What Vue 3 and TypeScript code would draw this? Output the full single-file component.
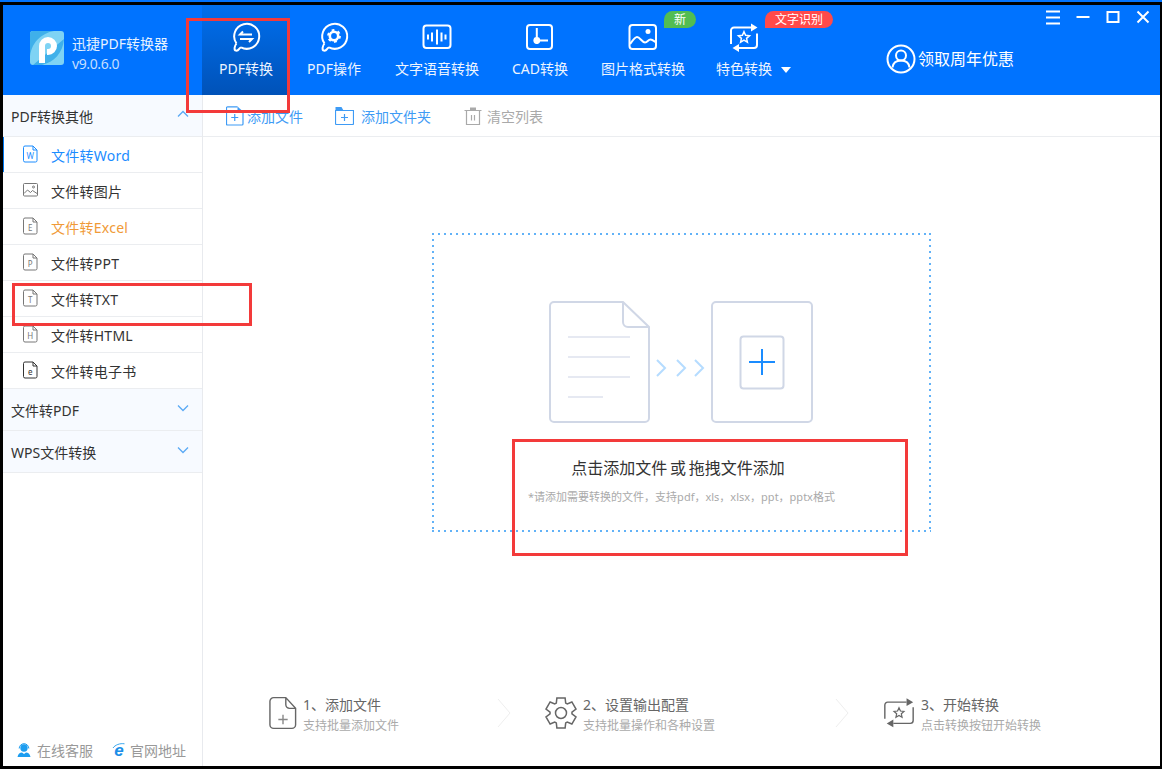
<template>
  <div class="screen">
    <div class="top-strip"></div>
    <div class="window">
      <!-- header -->
      <header class="header">
        <div class="brand">
          <svg class="brand-logo" viewBox="0 0 34 34">
            <rect width="34" height="34" rx="3" fill="#7ed3f4" />
            <path d="M0 28C0 12 12 2 24 0H3a3 3 0 0 0-3 3ZM34 8C33 22 24 31 12 34H3Z" fill="#3fb0ea" />
            <path d="M9 32V15a9 9 0 1 1 9 9h-1v-6h1a3 3 0 1 0-3-3v17Z" fill="#fff" />
          </svg>
          <div class="brand-text">
            <div>迅捷PDF转换器</div>
            <div class="brand-ver">v9.0.6.0</div>
          </div>
        </div>

        <nav class="nav">
          <div
            v-for="n in navItems"
            :key="n.key"
            class="nav-item"
            :class="{ active: n.key === 'pdf' }"
            :style="{ width: n.width + 'px' }"
          >
            <svg class="nav-icon" viewBox="0 0 32 32">
              <template v-if="n.key === 'pdf' || n.key === 'op'">
                <path d="M6.500 22.500A12.500 12.500 0 1 1 11 26.400" />
                <path d="M6.500 22.500C4.500 25 3.600 29 6 29.600C9 30.200 8.600 27 11 26.400" />
              </template>
              <template v-if="n.key === 'pdf'">
                <path d="M13 10.500L10 13.500H22M10 18H22L19 21" />
              </template>
              <template v-if="n.key === 'op'">
                <circle cx="16" cy="15" r="4.200" stroke-width="2.600" />
                <circle cx="16" cy="15" r="6" stroke-width="1.800" stroke-dasharray="2.800 3.480" />
              </template>
              <template v-if="n.key === 'voice'">
                <rect x="2.500" y="4.500" width="27" height="22.500" rx="3" />
                <path d="M7 13.500v5M11 11.500v9M16 8.500v15M20.500 11.500v9M24.500 13.500v5" />
              </template>
              <template v-if="n.key === 'cad'">
                <rect x="3" y="4" width="25" height="24" rx="3" />
                <path d="M12.800 7V23M13 19.500H24" />
                <circle cx="12.800" cy="19.500" r="3.400" fill="#fff" stroke="none" />
              </template>
              <template v-if="n.key === 'image'">
                <rect x="2.500" y="4" width="26.500" height="24" rx="3" />
                <circle cx="21" cy="10.500" r="2.500" fill="#fff" stroke="none" />
                <path d="M3 23C6 19 8 16 10 16C13 16 15 21.500 18 21.500C20.500 21.500 21 18.500 23.500 18.500C25 18.500 27 20 28.500 21" />
              </template>
              <template v-if="n.key === 'special'">
                <path d="M3 23V9.500a3 3 0 0 1 3-3H24M29 12.500V24a3 3 0 0 1-3 3H10" />
                <path d="M23 2.500L29.500 6.500L23 10.500ZM11 23L4.500 27L11 31Z" fill="#fff" stroke="none" />
                <path :d="starPath(16, 16.500, 5.800, 2.700)" stroke-width="1.500" />
              </template>
            </svg>
            <span class="nav-label">{{ n.label }}</span>
            <span v-if="n.badge" class="badge" :class="n.badgeClass">{{ n.badge }}</span>
            <span v-if="n.key === 'special'" class="caret"></span>
          </div>
        </nav>

        <div class="header-right">
          <div class="win-controls">
            <button class="win-btn">
              <svg viewBox="0 0 16 16"><path d="M1 2.500H15M1 8.500H15M1 14.500H15" /></svg>
            </button>
            <button class="win-btn">
              <svg viewBox="0 0 16 16"><path d="M1.500 8H14.500" /></svg>
            </button>
            <button class="win-btn">
              <svg viewBox="0 0 16 16"><rect x="2.500" y="3" width="11" height="10" /></svg>
            </button>
            <button class="win-btn">
              <svg viewBox="0 0 16 16"><path d="M2.500 2.500L13.500 13.500M13.500 2.500L2.500 13.500" /></svg>
            </button>
          </div>
          <div class="promo">
            <svg class="promo-icon" viewBox="0 0 30 30">
              <circle cx="15" cy="15" r="13.500" />
              <circle cx="15" cy="11.500" r="5" />
              <path d="M6.500 23.500C7 19 10 16.500 15 16.500C20 16.500 23 19 23.500 23.500" />
            </svg>
            <span>领取周年优惠</span>
          </div>
        </div>
      </header>

      <div class="body">
        <!-- sidebar -->
        <aside class="sidebar">
          <div class="side-head">
            <span>PDF转换其他</span>
            <svg class="chev" viewBox="0 0 12 8"><path d="M1 6.500L6 1.500L11 6.500" /></svg>
          </div>
          <div
            v-for="(item, i) in sideItems"
            :key="item.label"
            class="side-item"
            :class="{ current: i === 0 }"
            :style="{ color: item.color }"
          >
            <svg class="side-icon" viewBox="0 0 15 18" :style="{ color: item.iconColor }">
              <template v-if="item.letter">
                <path d="M2 1H10L14 5V15.500a1.500 1.500 0 0 1-1.500 1.500H2a1.500 1.500 0 0 1-1.500-1.500V2.500A1.500 1.500 0 0 1 2 1ZM10 1V5H14" />
                <text x="7.300" y="13.500" text-anchor="middle">{{ item.letter }}</text>
              </template>
              <template v-else>
                <rect x="0.500" y="2.500" width="14" height="12.500" rx="1" />
                <circle cx="10.500" cy="6" r="1" />
                <path d="M1 12.500L4.500 9L7.500 11.500L9.500 9.500L14 12.500" />
              </template>
            </svg>
            <span>{{ item.label }}</span>
          </div>
          <div class="side-head">
            <span>文件转PDF</span>
            <svg class="chev" viewBox="0 0 12 8"><path d="M1 1.500L6 6.500L11 1.500" /></svg>
          </div>
          <div class="side-head">
            <span>WPS文件转换</span>
            <svg class="chev" viewBox="0 0 12 8"><path d="M1 1.500L6 6.500L11 1.500" /></svg>
          </div>
          <div class="side-foot">
            <div class="foot-link">
              <svg class="foot-icon" viewBox="0 0 14 14">
                <circle cx="7" cy="5" r="3.700" fill="#1c9df0" />
                <path d="M2.200 5.500A4.800 4.800 0 0 1 11.800 5.500" fill="none" stroke="#1c9df0" stroke-width="1" />
                <path d="M0.500 14C1 10.800 3 9.500 5 9.500L7 11L9 9.500C11 9.500 13 10.800 13.500 14Z" fill="#1c9df0" />
              </svg>
              <span>在线客服</span>
            </div>
            <div class="foot-link foot-site">
              <svg class="foot-icon" viewBox="0 0 14 14">
                <path d="M1 5C3 2 8 0 12.500 0.800" fill="none" stroke="#39a7ee" stroke-width="1" />
                <text class="ie-mark" x="7" y="12.500" text-anchor="middle">e</text>
              </svg>
              <span>官网地址</span>
            </div>
          </div>
        </aside>

        <!-- main -->
        <main class="main">
          <div class="toolbar">
            <div class="tool tool-file">
              <svg class="tool-icon" viewBox="0 0 18 20">
                <path d="M11.500 0.800H1.500a1 1 0 0 0-1 1V18a1 1 0 0 0 1 1H16a1 1 0 0 0 1-1V5.500" />
                <path d="M11.500 0.500L17 5.500H11.500Z" class="solid" />
                <path d="M8.750 8V15M5.250 11.500H12.250" />
              </svg>
              <span>添加文件</span>
            </div>
            <div class="tool tool-folder">
              <svg class="tool-icon" viewBox="0 0 19 19">
                <path d="M0.500 4.500H18.500V17.500a1 1 0 0 1-1 1H1.500a1 1 0 0 1-1-1Z" />
                <path d="M0.500 1H6.500L8.500 4.500H0.500Z" class="solid" />
                <path d="M9.500 8V15M6 11.500H13" />
              </svg>
              <span>添加文件夹</span>
            </div>
            <div class="tool tool-clear">
              <svg class="tool-icon" viewBox="0 0 18 18">
                <path d="M6 0.500H12V3H6Z" class="solid" />
                <path d="M0.500 3.500H17.500M2.500 3.500V17.500H15.500V3.500M7.500 8V13.500M10.500 8V13.500" />
              </svg>
              <span>清空列表</span>
            </div>
          </div>

          <div class="drop">
            <svg class="drop-art" viewBox="0 0 264 122">
              <g fill="none" stroke="#d0d7e6" stroke-width="2">
                <path d="M5 1H74L100 26V117a4 4 0 0 1-4 4H5a4 4 0 0 1-4-4V5a4 4 0 0 1 4-4Z" />
                <path d="M74 1V21a5 5 0 0 0 5 5H100" />
                <rect x="163" y="1" width="100" height="120" rx="4" />
                <rect x="191.500" y="35.500" width="43" height="52" rx="3" />
              </g>
              <path d="M19 36H81M19 56H81M19 76H81M19 96H54" fill="none" stroke="#e6e9f2" stroke-width="2" />
              <path d="M108 59L116 67L108 75M128 59L136 67L128 75M146 59L154 67L146 75" fill="none" stroke="#b5dcff" stroke-width="2" />
              <path d="M200 61H226M213 48V74" fill="none" stroke="#1a8cff" stroke-width="2" />
            </svg>
            <div class="drop-title">点击添加文件 或 拖拽文件添加</div>
            <div class="drop-sub">*请添加需要转换的文件，支持pdf，xls，xlsx，ppt，pptx格式</div>
          </div>

          <div class="steps">
            <div class="step">
              <svg class="step-icon" viewBox="0 0 30 36">
                <path d="M5 1.500H18L28.500 13V30.500a4 4 0 0 1-4 4H5a4 4 0 0 1-4-4V5.500a4 4 0 0 1 4-4ZM18 1.500V9a4 4 0 0 0 4 4H28.500" />
                <path d="M15 20V30M10 25H20" stroke="#888" />
              </svg>
              <div>
                <div class="step-title">1、添加文件</div>
                <div class="step-sub">支持批量添加文件</div>
              </div>
            </div>
            <svg class="step-sep" viewBox="0 0 14 30"><path d="M1 1L13 15L1 29" /></svg>
            <div class="step">
              <svg class="step-icon step-gear" viewBox="0 0 32 34">
                <path :d="gearPath(16, 17, 15.500, 11)" />
                <circle cx="16" cy="17" r="5.500" />
              </svg>
              <div>
                <div class="step-title">2、设置输出配置</div>
                <div class="step-sub">支持批量操作和各种设置</div>
              </div>
            </div>
            <svg class="step-sep" viewBox="0 0 14 30"><path d="M1 1L13 15L1 29" /></svg>
            <div class="step">
              <svg class="step-icon step-loop" viewBox="0 0 32 36">
                <path d="M1 24V9.500a3 3 0 0 1 3-3H24M31 12V26a3 3 0 0 1-3 3H10" />
                <path d="M24 2.500L31 6.500L24 10.500ZM10 25L3 29L10 33Z" class="solid" />
                <path :d="starPath(16, 18, 5.500, 2.600)" stroke-width="1.300" />
              </svg>
              <div>
                <div class="step-title">3、开始转换</div>
                <div class="step-sub">点击转换按钮开始转换</div>
              </div>
            </div>
          </div>
        </main>
      </div>
    </div>

    <!-- red annotations drawn over the screenshot -->
    <div class="mark mark-nav"></div>
    <div class="mark mark-txt"></div>
    <div class="mark mark-drop"></div>
  </div>
</template>

<script setup lang="ts">
interface NavItem {
  key: string
  label: string
  width: number
  badge?: string
  badgeClass?: string
}

interface SideItem {
  label: string
  letter: string
  color: string
  iconColor: string
}

const navItems: NavItem[] = [
  { key: 'pdf', label: 'PDF转换', width: 88 },
  { key: 'op', label: 'PDF操作', width: 88 },
  { key: 'voice', label: '文字语音转换', width: 118 },
  { key: 'cad', label: 'CAD转换', width: 88 },
  { key: 'image', label: '图片格式转换', width: 118, badge: '新', badgeClass: 'badge-new' },
  { key: 'special', label: '特色转换', width: 84, badge: '文字识别', badgeClass: 'badge-ocr' },
]

const sideItems: SideItem[] = [
  { label: '文件转Word', letter: 'W', color: '#1a8cff', iconColor: '#1a8cff' },
  { label: '文件转图片', letter: '', color: '#333', iconColor: '#777' },
  { label: '文件转Excel', letter: 'E', color: '#f09a37', iconColor: '#777' },
  { label: '文件转PPT', letter: 'P', color: '#333', iconColor: '#777' },
  { label: '文件转TXT', letter: 'T', color: '#333', iconColor: '#777' },
  { label: '文件转HTML', letter: 'H', color: '#333', iconColor: '#777' },
  { label: '文件转电子书', letter: 'e', color: '#333', iconColor: '#333' },
]

// six lobed outline for the settings step
function gearPath(cx: number, cy: number, outer: number, inner: number): string {
  const pts: string[] = []
  for (let i = 0; i < 6; i++) {
    const a = (Math.PI / 3) * i - Math.PI / 2
    const spread = 0.27
    const list: [number, number][] = [
      [inner, a - 0.44],
      [outer, a - spread],
      [outer, a + spread],
      [inner, a + 0.44],
    ]
    for (const [r, t] of list) {
      pts.push(`${(cx + r * Math.cos(t)).toFixed(2)} ${(cy + r * Math.sin(t)).toFixed(2)}`)
    }
  }
  return 'M' + pts.join('L') + 'Z'
}

function starPath(cx: number, cy: number, outer: number, inner: number): string {
  const pts: string[] = []
  for (let i = 0; i < 10; i++) {
    const r = i % 2 === 0 ? outer : inner
    const a = (Math.PI / 5) * i - Math.PI / 2
    pts.push(`${(cx + r * Math.cos(a)).toFixed(2)} ${(cy + r * Math.sin(a)).toFixed(2)}`)
  }
  return 'M' + pts.join('L') + 'Z'
}
</script>

<style>
html,
body {
  margin: 0;
  background: #fff;
}
</style>

<style scoped>
.screen {
  position: relative;
  width: 1162px;
  height: 770px;
  overflow: hidden;
  background: #fff;
  font-family: "Noto Sans", "Noto Sans CJK SC", sans-serif;
  font-size: 14px;
  color: #333;
}

.top-strip {
  height: 2px;
  background: #0073ff;
}

.window {
  display: flex;
  flex-direction: column;
  box-sizing: border-box;
  height: 767px;
  border-style: solid;
  border-color: #000;
  border-width: 3px 2px 3px 3px;
}

/* header */
.header {
  display: flex;
  flex: none;
  height: 90px;
  background: #0073ff;
  color: #fff;
}

.brand {
  display: flex;
  flex: none;
  box-sizing: border-box;
  width: 199px;
  padding: 26px 0 0 27px;
}

.brand-logo {
  width: 34px;
  height: 34px;
}

.brand-text {
  margin: 3px 0 0 8px;
  line-height: 20px;
  color: #e6f1ff;
}

.brand-ver {
  letter-spacing: -0.4px;
  color: #c4deff;
}

.nav {
  display: flex;
  flex: none;
}

.nav-item {
  position: relative;
  display: flex;
  flex-direction: column;
  align-items: center;
  box-sizing: border-box;
  padding-top: 16px;
}

.nav-item.active {
  background: linear-gradient(#006fee, #0052b8);
}

.nav-icon {
  width: 32px;
  height: 32px;
  fill: none;
  stroke: #fff;
  stroke-width: 2;
}

.nav-label {
  margin-top: 6px;
  line-height: 20px;
  white-space: nowrap;
  color: #eef5ff;
}

.badge {
  position: absolute;
  top: 6px;
  height: 17px;
  border-radius: 9px 9px 9px 0;
  font-size: 12px;
  line-height: 17px;
  text-align: center;
  color: #fff;
}

.badge-new {
  left: 80px;
  width: 32px;
  background: #52bd52;
}

.badge-ocr {
  left: 63px;
  width: 68px;
  background: #ff4a4a;
}

.caret {
  position: absolute;
  top: 62px;
  left: 79px;
  border-top: 6px solid #fff;
  border-right: 5px solid transparent;
  border-left: 5px solid transparent;
}

.header-right {
  flex: 1;
  min-width: 0;
}

.win-controls {
  display: flex;
  justify-content: flex-end;
  padding: 2px 2px 0 0;
}

.win-btn {
  display: flex;
  align-items: center;
  justify-content: center;
  width: 30px;
  height: 20px;
  padding: 0;
  border: 0;
  background: none;
}

.win-btn svg {
  width: 16px;
  height: 16px;
  fill: none;
  stroke: #fff;
  stroke-width: 2;
}

.promo {
  display: flex;
  align-items: center;
  gap: 2px;
  margin: 17px 0 0 100px;
  font-size: 16px;
  line-height: 30px;
}

.promo-icon {
  width: 30px;
  height: 30px;
  fill: none;
  stroke: #fff;
  stroke-width: 2;
}

/* sidebar */
.body {
  display: flex;
  flex: 1;
  min-height: 0;
}

.sidebar {
  display: flex;
  flex: none;
  flex-direction: column;
  box-sizing: border-box;
  width: 200px;
  border-right: 1px solid #e8eaee;
}

.side-head {
  display: flex;
  flex: none;
  align-items: center;
  justify-content: space-between;
  box-sizing: border-box;
  height: 42px;
  padding: 0 13px 0 8px;
  border-bottom: 1px solid #ebedf0;
  background: #f7faff;
}

.chev {
  width: 12px;
  height: 8px;
  margin-bottom: 3px;
  fill: none;
  stroke: #5aa9f5;
  stroke-width: 1.300;
}

.side-item {
  display: flex;
  flex: none;
  align-items: center;
  box-sizing: border-box;
  height: 36px;
  padding: 1px 0 0 20px;
  border-bottom: 1px solid #ebedf0;
  letter-spacing: 0.25px;
}

.side-item.current {
  box-shadow: inset 1px 0 0 #0078f0;
}

.side-icon {
  flex: none;
  width: 15px;
  height: 18px;
  margin: -2px 13px 0 0;
  fill: none;
  stroke: currentColor;
  stroke-width: 1;
}

.side-icon text {
  fill: currentColor;
  stroke: none;
  font-family: "Noto Sans", sans-serif;
  font-size: 8px;
}

.side-foot {
  display: flex;
  gap: 19px;
  align-items: center;
  height: 32px;
  margin-top: auto;
  padding-left: 14px;
  color: #999;
}

.foot-link {
  display: flex;
  gap: 6px;
  align-items: center;
  white-space: nowrap;
}

.foot-site {
  gap: 4px;
}

.foot-icon {
  width: 14px;
  height: 14px;
  overflow: visible;
}

.ie-mark {
  fill: #1c8fe8;
  font-family: "Liberation Sans", sans-serif;
  font-size: 17px;
  font-style: italic;
  font-weight: 700;
}

/* main */
.main {
  display: flex;
  flex: 1;
  flex-direction: column;
  min-width: 0;
}

.toolbar {
  display: flex;
  flex: none;
  align-items: center;
  box-sizing: border-box;
  height: 42px;
  padding-left: 23px;
  border-bottom: 1px solid #ebedf0;
  color: #3e9bf5;
}

.tool {
  display: flex;
  align-items: center;
  line-height: 20px;
}

.tool span {
  padding-top: 2px;
}

.tool-icon {
  fill: none;
  stroke: currentColor;
  stroke-width: 1.200;
}

.solid {
  fill: currentColor;
  stroke: none;
}

.tool-file {
  gap: 3px;
  margin-right: 32px;
}

.tool-file .tool-icon {
  width: 18px;
  height: 20px;
}

.tool-folder {
  gap: 7px;
  margin-right: 33px;
}

.tool-folder .tool-icon {
  width: 19px;
  height: 19px;
}

.tool-clear {
  gap: 5px;
  color: #a9a9a9;
}

.tool-clear .tool-icon {
  width: 18px;
  height: 18px;
}

/* dots are 2px with a 6px pitch, wider than border: dotted gives */
.drop {
  display: flex;
  flex: none;
  flex-direction: column;
  align-items: center;
  box-sizing: border-box;
  width: 499px;
  height: 299px;
  margin: 96px auto 0;
  padding-top: 68px;
  background:
    repeating-linear-gradient(to right, #62b2f7 0 2px, transparent 2px 6px) left top / 100% 2px no-repeat,
    repeating-linear-gradient(to right, #62b2f7 0 2px, transparent 2px 6px) left bottom / 100% 2px no-repeat,
    repeating-linear-gradient(to bottom, #62b2f7 0 2px, transparent 2px 6px) left top / 2px 100% no-repeat,
    repeating-linear-gradient(to bottom, #62b2f7 0 2px, transparent 2px 6px) right top / 2px 100% no-repeat;
}

.drop-art {
  flex: none;
  width: 264px;
  height: 122px;
  margin-right: 1px;
}

.drop-title {
  margin: 33px 7px 0 0;
  font-size: 16px;
  line-height: 24px;
  word-spacing: -1.500px;
  color: #333;
}

.drop-sub {
  margin-top: 9px;
  font-size: 11px;
  line-height: 16px;
  color: #aaa;
}

.steps {
  display: grid;
  grid-template-columns: 228px 48px 290px 48px auto;
  align-items: start;
  margin: 164px 0 0 66px;
}

.step {
  display: flex;
  gap: 6px;
}

.step-icon {
  flex: none;
  width: 28px;
  height: 34px;
  fill: none;
  stroke: #666;
  stroke-width: 1.500;
  color: #666;
}

.step-gear {
  width: 32px;
}

.step-loop {
  width: 32px;
}

.step-title {
  margin-top: -1px;
  line-height: 20px;
  color: #666;
}

.step-sub {
  margin-top: 1px;
  font-size: 12px;
  line-height: 20px;
  color: #aaa;
}

.step-sep {
  width: 14px;
  height: 30px;
  margin-top: 2px;
  fill: none;
  stroke: #eeeeee;
  stroke-width: 1;
}

/* annotations */
.mark {
  position: absolute;
  box-sizing: border-box;
  border: 3px solid #f33a3a;
}

.mark-nav {
  top: 18px;
  left: 186px;
  width: 104px;
  height: 95px;
}

.mark-txt {
  top: 283px;
  left: 12px;
  width: 240px;
  height: 43px;
}

.mark-drop {
  top: 439px;
  left: 512px;
  width: 396px;
  height: 117px;
}
</style>
